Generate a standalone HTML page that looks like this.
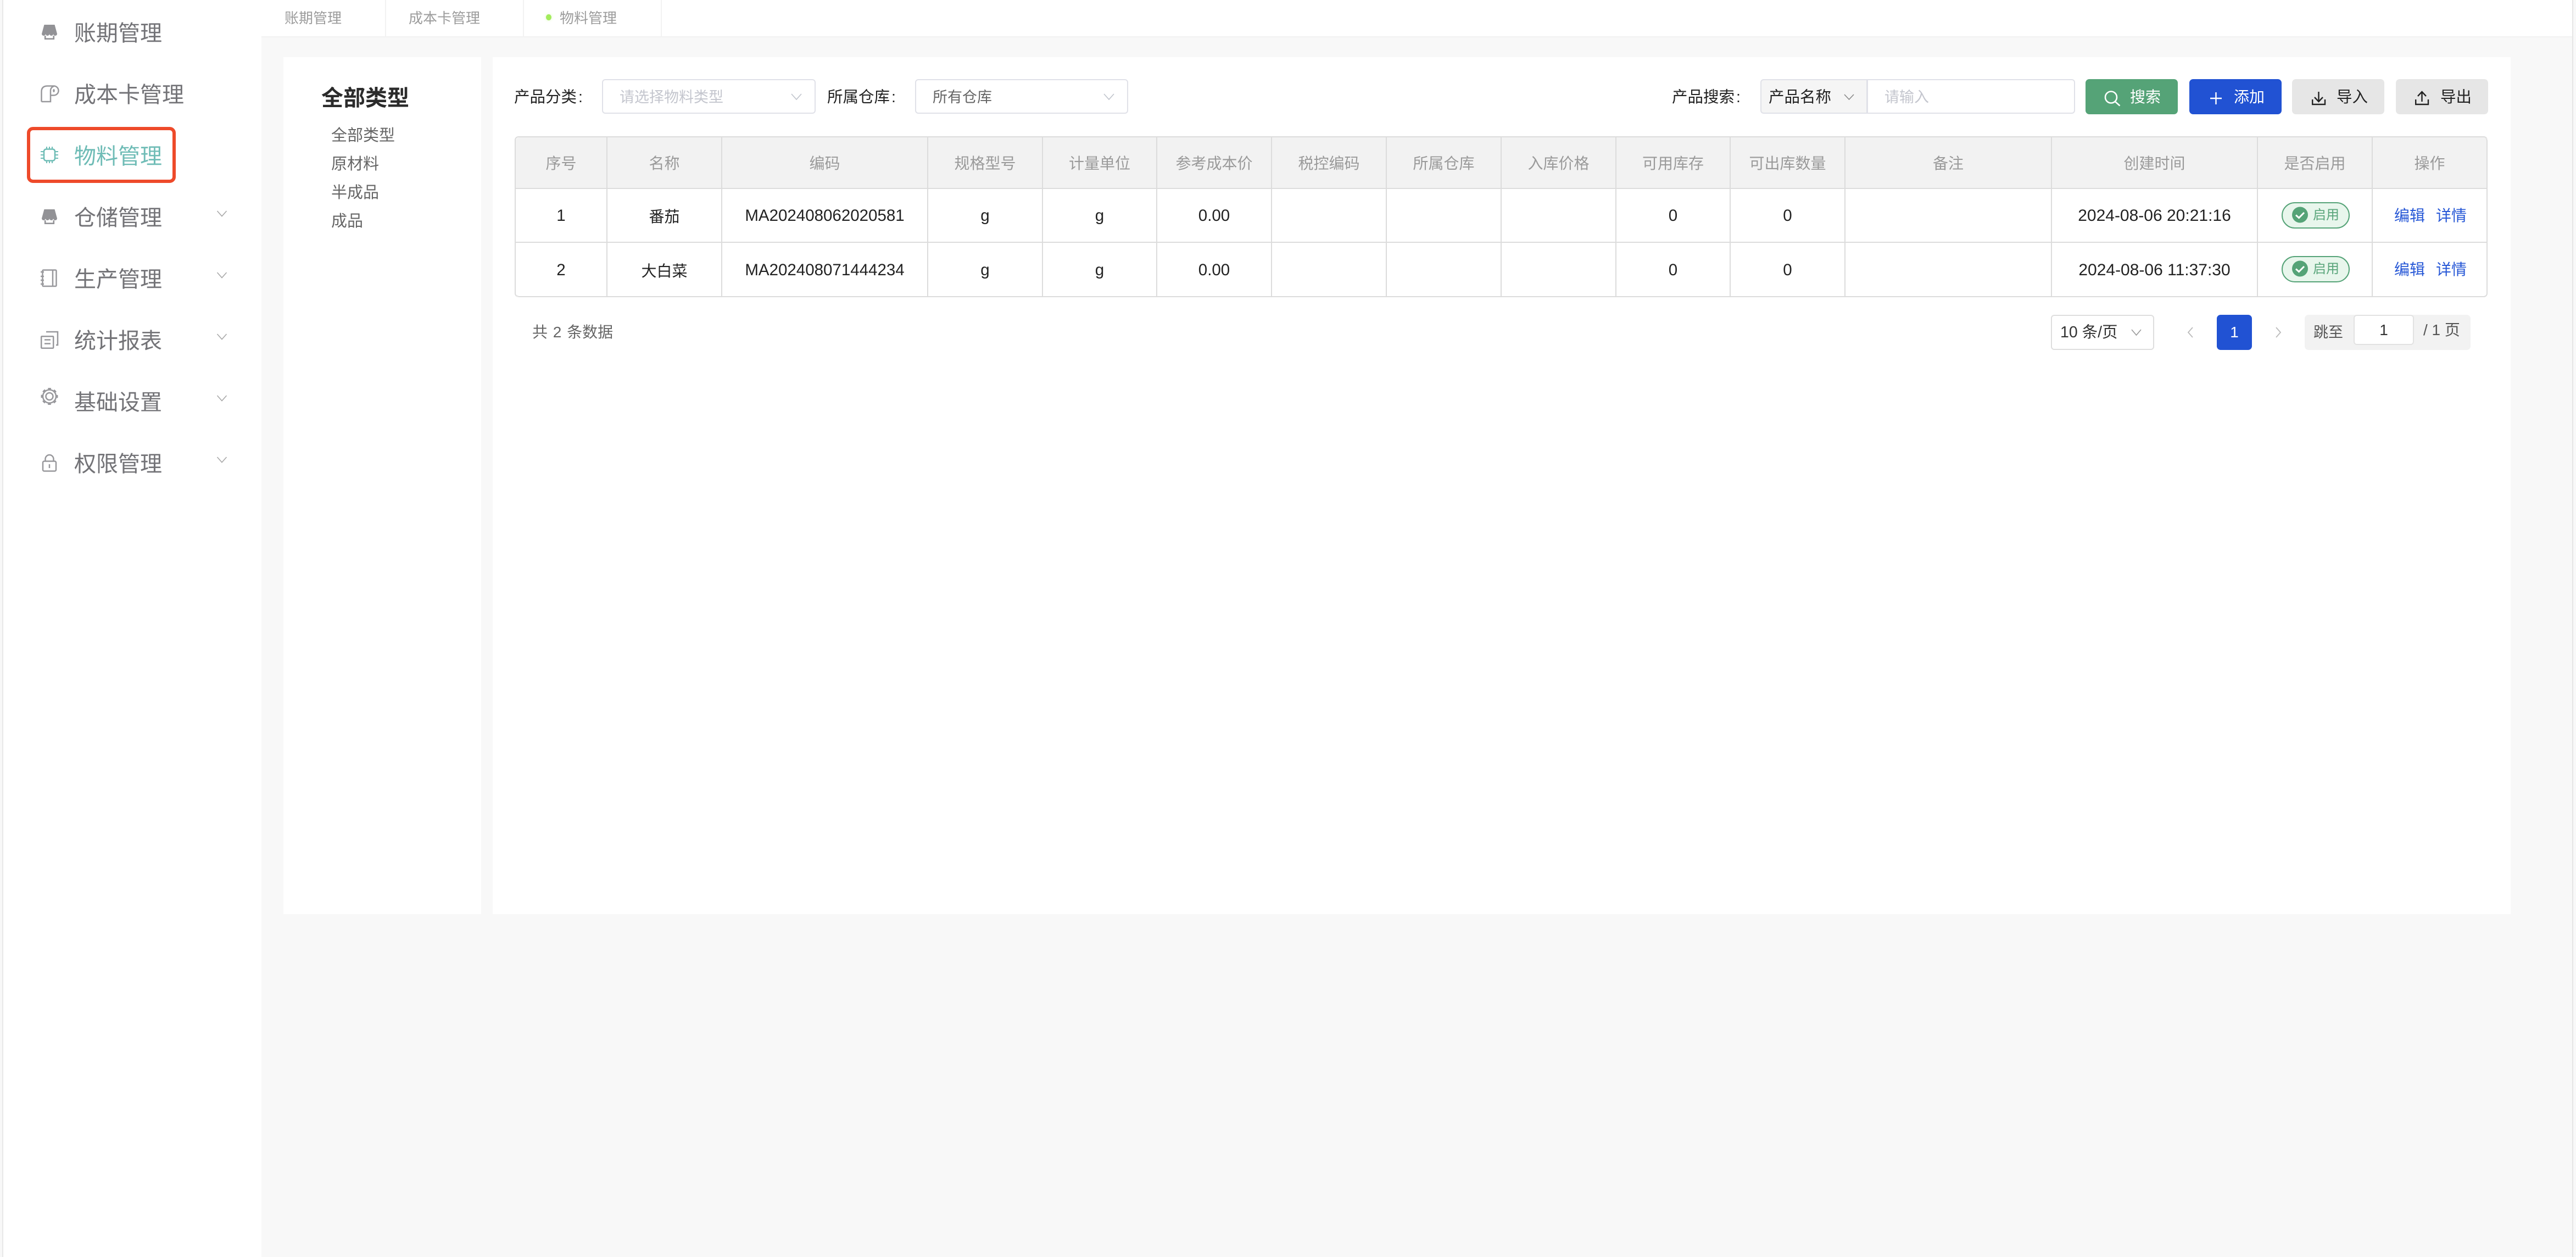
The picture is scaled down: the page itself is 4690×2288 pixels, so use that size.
<!DOCTYPE html>
<html lang="zh-CN">
<head>
<meta charset="utf-8">
<title>物料管理</title>
<style>
html,body{margin:0;padding:0;width:4690px;height:2288px;overflow:hidden;background:#f8f8f8}
body{position:relative;font-family:"Liberation Sans","Noto Sans CJK SC",sans-serif;color:#222}
.a{position:absolute;box-sizing:border-box}
.t{position:absolute;white-space:nowrap;line-height:60px;height:60px}
.nav{font-size:40px;left:135px;color:#737377}
.tab{font-size:26px;color:#9c9c9c}
.sub{font-size:29px;left:603px;color:#666}
.lab{font-size:28.5px;color:#222}
.lab i{font-style:normal;margin-left:3px}
.sel{position:absolute;box-sizing:border-box;border:2px solid #e0e1e8;border-radius:6px;background:#fff}
.btn{position:absolute;box-sizing:border-box;top:144px;height:64px;width:168px;border-radius:7px}
table{position:absolute;left:937px;top:248px;width:3592px;border-collapse:separate;border-spacing:0;table-layout:fixed;border-top:2px solid #dcdcdc;border-left:2px solid #dcdcdc;border-radius:7px 7px 7px 7px;box-sizing:border-box}
th,td{box-sizing:border-box;border-right:2px solid #dcdcdc;border-bottom:2px solid #dcdcdc;text-align:center;padding:0;font-size:28px;font-weight:400;white-space:nowrap;overflow:visible}
th{background:#f2f2f2;color:#9a9a9a;height:94px}
td{color:#222;background:#fff;padding-top:2px}
tr.r1 td{height:98px}
tr.r2 td{height:99px}
.n{font-size:29.5px}
.d{font-size:30px}
tr.r2 td:first-child{border-bottom-left-radius:7px}
tr.r2 td:last-child{border-bottom-right-radius:7px}
th:last-child{border-top-right-radius:7px}
th:first-child{border-top-left-radius:7px}
</style>
</head>
<body>
<!-- sidebar -->
<div class="a" style="left:0;top:0;width:6px;height:2288px;background:#f8f8f8;border-right:2px solid #e8e8e8"></div>
<div class="a" style="left:6px;top:0;width:470px;height:2288px;background:#fff"></div>
<div class="a" style="right:0;top:0;width:7px;height:2288px;background:#f8f8f8;border-left:2px solid #e6e6e6"></div>

<!-- tab bar -->
<div class="a" style="left:476px;top:0;width:4207px;height:68px;background:#fff;border-bottom:2px solid #f2f2f2"></div>
<div class="a" style="left:701px;top:0;width:2px;height:66px;background:#f2f2f2"></div>
<div class="a" style="left:952px;top:0;width:2px;height:66px;background:#f2f2f2"></div>
<div class="a" style="left:1203px;top:0;width:2px;height:66px;background:#f2f2f2"></div>
<div class="t tab" style="left:518px;top:3px">账期管理</div>
<div class="t tab" style="left:744px;top:3px">成本卡管理</div>
<div class="a" style="left:994px;top:26px;width:10px;height:11px;border-radius:50%;background:#a3ec5c;box-shadow:0 0 6px #dff8c8"></div>
<div class="t tab" style="left:1019px;top:3px">物料管理</div>

<!-- panels -->
<div class="a" style="left:516px;top:104px;width:360px;height:1560px;background:#fff"></div>
<div class="a" style="left:897px;top:104px;width:3674px;height:1560px;background:#fff"></div>

<!-- nav -->
<div class="t nav" style="top:31px">账期管理</div>
<div class="t nav" style="top:143px">成本卡管理</div>
<div class="t nav" style="top:255px;color:#6fbcb6">物料管理</div>
<div class="t nav" style="top:367px">仓储管理</div>
<div class="t nav" style="top:479px">生产管理</div>
<div class="t nav" style="top:591px">统计报表</div>
<div class="t nav" style="top:703px">基础设置</div>
<div class="t nav" style="top:815px">权限管理</div>
<div class="a" style="left:49px;top:231px;width:271px;height:102px;border:6px solid #ee4a2a;border-radius:11px"></div>

<!-- type tree -->
<div class="t" style="left:585px;top:149px;font-size:40px;font-weight:700;color:#2b2b2b">全部类型</div>
<div class="t sub" style="top:217px">全部类型</div>
<div class="t sub" style="top:269px">原材料</div>
<div class="t sub" style="top:321px">半成品</div>
<div class="t sub" style="top:373px">成品</div>

<!-- filters -->
<div class="t lab" style="left:936px;top:147px">产品分类<i>:</i></div>
<div class="sel" style="left:1096px;top:144px;width:389px;height:63px"></div>
<div class="t" style="left:1128px;top:147px;font-size:27px;color:#c4c6ce">请选择物料类型</div>
<div class="t lab" style="left:1506px;top:147px">所属仓库<i>:</i></div>
<div class="sel" style="left:1666px;top:144px;width:388px;height:63px"></div>
<div class="t" style="left:1698px;top:147px;font-size:27px;color:#666">所有仓库</div>
<div class="t lab" style="left:3044px;top:147px">产品搜索<i>:</i></div>
<div class="sel" style="left:3205px;top:144px;width:195px;height:63px;background:#f5f5f5;border-radius:6px 0 0 6px"></div>
<div class="t lab" style="left:3220px;top:147px">产品名称</div>
<div class="sel" style="left:3399px;top:144px;width:379px;height:63px;border-radius:0 6px 6px 0"></div>
<div class="t" style="left:3431px;top:147px;font-size:27px;color:#c4c6ce">请输入</div>

<!-- buttons -->
<div class="btn" style="left:3797px;background:#55a377"></div>
<div class="t" style="left:3878px;top:147px;font-size:28px;color:#fff">搜索</div>
<div class="btn" style="left:3986px;background:#2152d3"></div>
<div class="t" style="left:4067px;top:147px;font-size:28px;color:#fff">添加</div>
<div class="btn" style="left:4173px;background:#e6e6e6"></div>
<div class="t lab" style="left:4254px;top:147px">导入</div>
<div class="btn" style="left:4362px;background:#e6e6e6"></div>
<div class="t lab" style="left:4443px;top:147px">导出</div>

<!-- table -->
<table>
<colgroup>
<col style="width:167px"><col style="width:209px"><col style="width:375px"><col style="width:209px"><col style="width:208px"><col style="width:209px"><col style="width:209px"><col style="width:209px"><col style="width:209px"><col style="width:208px"><col style="width:209px"><col style="width:376px"><col style="width:375px"><col style="width:209px"><col style="width:209px">
</colgroup>
<tr><th>序号</th><th>名称</th><th>编码</th><th>规格型号</th><th>计量单位</th><th>参考成本价</th><th>税控编码</th><th>所属仓库</th><th>入库价格</th><th>可用库存</th><th>可出库数量</th><th>备注</th><th>创建时间</th><th>是否启用</th><th>操作</th></tr>
<tr class="r1"><td class="n">1</td><td>番茄</td><td class="n">MA202408062020581</td><td class="n">g</td><td class="n">g</td><td class="n">0.00</td><td></td><td></td><td></td><td class="n">0</td><td class="n">0</td><td></td><td class="d">2024-08-06 20:21:16</td><td></td><td></td></tr>
<tr class="r2"><td class="n">2</td><td>大白菜</td><td class="n">MA202408071444234</td><td class="n">g</td><td class="n">g</td><td class="n">0.00</td><td></td><td></td><td></td><td class="n">0</td><td class="n">0</td><td></td><td class="d">2024-08-06 11:37:30</td><td></td><td></td></tr>
</table>

<!-- badges & actions -->
<div class="a" style="left:4154px;top:368px;width:124px;height:48px;border:2px solid #55a377;border-radius:24px;background:#e8f6ec"></div>
<div class="t" style="left:4211px;top:362px;font-size:24px;color:#5aa57b">启用</div>
<div class="a" style="left:4154px;top:466px;width:124px;height:48px;border:2px solid #55a377;border-radius:24px;background:#e8f6ec"></div>
<div class="t" style="left:4211px;top:460px;font-size:24px;color:#5aa57b">启用</div>
<div class="t" style="left:4359px;top:363px;font-size:28px;color:#2657d6">编辑</div>
<div class="t" style="left:4435px;top:363px;font-size:28px;color:#2657d6">详情</div>
<div class="t" style="left:4359px;top:461px;font-size:28px;color:#2657d6">编辑</div>
<div class="t" style="left:4435px;top:461px;font-size:28px;color:#2657d6">详情</div>

<!-- pagination -->
<div class="t" style="left:969px;top:575px;font-size:28px;word-spacing:2px;color:#666">共 2 条数据</div>
<div class="sel" style="left:3734px;top:573px;width:188px;height:64px;border-color:#dedede"></div>
<div class="t" style="left:3751px;top:575px;font-size:28.5px;color:#333">10 条/页</div>
<div class="a" style="left:4036px;top:573px;width:64px;height:64px;border-radius:7px;background:#2152d3"></div>
<div class="t" style="left:4036px;width:64px;text-align:center;top:575px;font-size:28px;color:#fff">1</div>
<div class="a" style="left:4196px;top:573px;width:302px;height:64px;border-radius:7px;background:#f2f2f2"></div>
<div class="t" style="left:4212px;top:575px;font-size:27px;color:#555">跳至</div>
<div class="a" style="left:4285px;top:573px;width:110px;height:55px;border-radius:6px;background:#fff;border:2px solid #e2e2e2"></div>
<div class="t" style="left:4285px;width:110px;text-align:center;top:571px;font-size:28px;color:#333">1</div>
<div class="t" style="left:4412px;top:571px;font-size:28px;color:#555">/ 1 页</div>

<!-- icons -->
<svg class="a" style="left:0;top:0" width="4690" height="2288" viewBox="0 0 4690 2288" fill="none">
<path d="M80.5 45H99.5L104 61.5a3.5 3.5 0 0 1-7 0a3.5 3.5 0 0 1-7 0a3.5 3.5 0 0 1-7 0a3.5 3.5 0 0 1-7 0Z" fill="#929296"/>
<path d="M82.2 65V70.7H97.8V65" stroke="#929296" stroke-width="2.6"/>
<path d="M75.5 185H92V165a8 8 0 0 1 6-8M75.5 185V167q0-10.5 11-10.5H98a8 8 0 0 1 0 17H92" stroke="#98989c" stroke-width="2.5"/>
<ellipse cx="98" cy="165" rx="1.8" ry="3" fill="#98989c"/>
<g stroke="#6fbdb6">
<rect x="80" y="271.5" width="20" height="21" rx="4" stroke-width="2.6"/>
<path d="M85 267v4.5M90 267v4.5M95 267v4.5M85 292.5v4.5M90 292.5v4.5M95 292.5v4.5M74 276h6M74 282h6M74 288h6M100 276h6M100 282h6M100 288h6" stroke-width="2"/>
</g>
<path d="M80.5 381H99.5L104 397.5a3.5 3.5 0 0 1-7 0a3.5 3.5 0 0 1-7 0a3.5 3.5 0 0 1-7 0a3.5 3.5 0 0 1-7 0Z" fill="#929296"/>
<path d="M82.2 401V406.7H97.8V401" stroke="#929296" stroke-width="2.6"/>
<g stroke="#98989c" stroke-width="2.5">
<rect x="77.5" y="491.5" width="25" height="29.5" rx="1.5"/>
<path d="M96 491.5V521"/>
<path d="M74 495h6M74 503h6M74 510h6M74 517h6"/>
<rect x="75.2" y="612.2" width="22" height="21.5" rx="1"/>
<path d="M84 604H105V628H102M81 618.5H92M81 625.5H92"/>
<circle cx="90" cy="721.5" r="6.5"/>
<circle cx="90" cy="721.5" r="12"/>
<circle cx="90" cy="721.5" r="14" stroke-width="3" stroke-dasharray="5.5 5.5" stroke-dashoffset="2.7"/>
<rect x="78" y="839.5" width="24" height="18" rx="2.5"/>
<path d="M82.5 839.5V835.5a7.5 7.5 0 0 1 15 0V839.5M90 845V852"/>
</g>
<g stroke="#a8a8a8" stroke-width="1.6">
<path d="M395.5 384L404 393.5L412.5 384"/>
<path d="M395.5 496L404 505.5L412.5 496"/>
<path d="M395.5 608L404 617.5L412.5 608"/>
<path d="M395.5 720L404 729.5L412.5 720"/>
<path d="M395.5 832L404 841.5L412.5 832"/>
</g>
<g stroke="#c0c4cc" stroke-width="1.6">
<path d="M1441 171L1450 181L1459 171"/>
<path d="M2010 171L2019 181L2028 171"/>
</g>
<path d="M3358 172L3366.5 181L3375 172" stroke="#888" stroke-width="1.6"/>
<path d="M3881 600L3889.5 610L3898 600" stroke="#999" stroke-width="1.6"/>
<path d="M3992 596L3984 605L3992 614" stroke="#bbb" stroke-width="1.8"/>
<path d="M4144 596L4152 605L4144 614" stroke="#bbb" stroke-width="1.8"/>
<!-- button icons -->
<circle cx="3843.5" cy="177" r="10.5" stroke="#fff" stroke-width="2.6"/>
<path d="M3851 185L3859.5 192.5" stroke="#fff" stroke-width="2.6"/>
<path d="M4024 179H4045M4034.5 168V190" stroke="#fff" stroke-width="2.4"/>
<path d="M4221.5 167V184M4214 177L4221.5 185L4229 177M4210.2 181V190H4233V181" stroke="#222" stroke-width="2.4"/>
<path d="M4409.5 185V168M4402 175L4409.5 167L4417 175M4398.2 181V190H4421V181" stroke="#222" stroke-width="2.4"/>
<!-- badge checks -->
<circle cx="4187.5" cy="391" r="14.5" fill="#55a377"/>
<path d="M4180 391.5L4185.5 396.5L4195 387" stroke="#fff" stroke-width="3"/>
<circle cx="4187.5" cy="489" r="14.5" fill="#55a377"/>
<path d="M4180 489.5L4185.5 494.5L4195 485" stroke="#fff" stroke-width="3"/>
</svg>

<!-- bottom shadow (clipped to frame) -->
<div class="a" style="left:0;top:2188px;width:4690px;height:100px;overflow:hidden">
<div class="a" style="left:270px;top:100px;width:4060px;height:0;box-shadow:0 0 70px 0 rgba(0,0,0,.17)"></div>
</div>
</body>
</html>
